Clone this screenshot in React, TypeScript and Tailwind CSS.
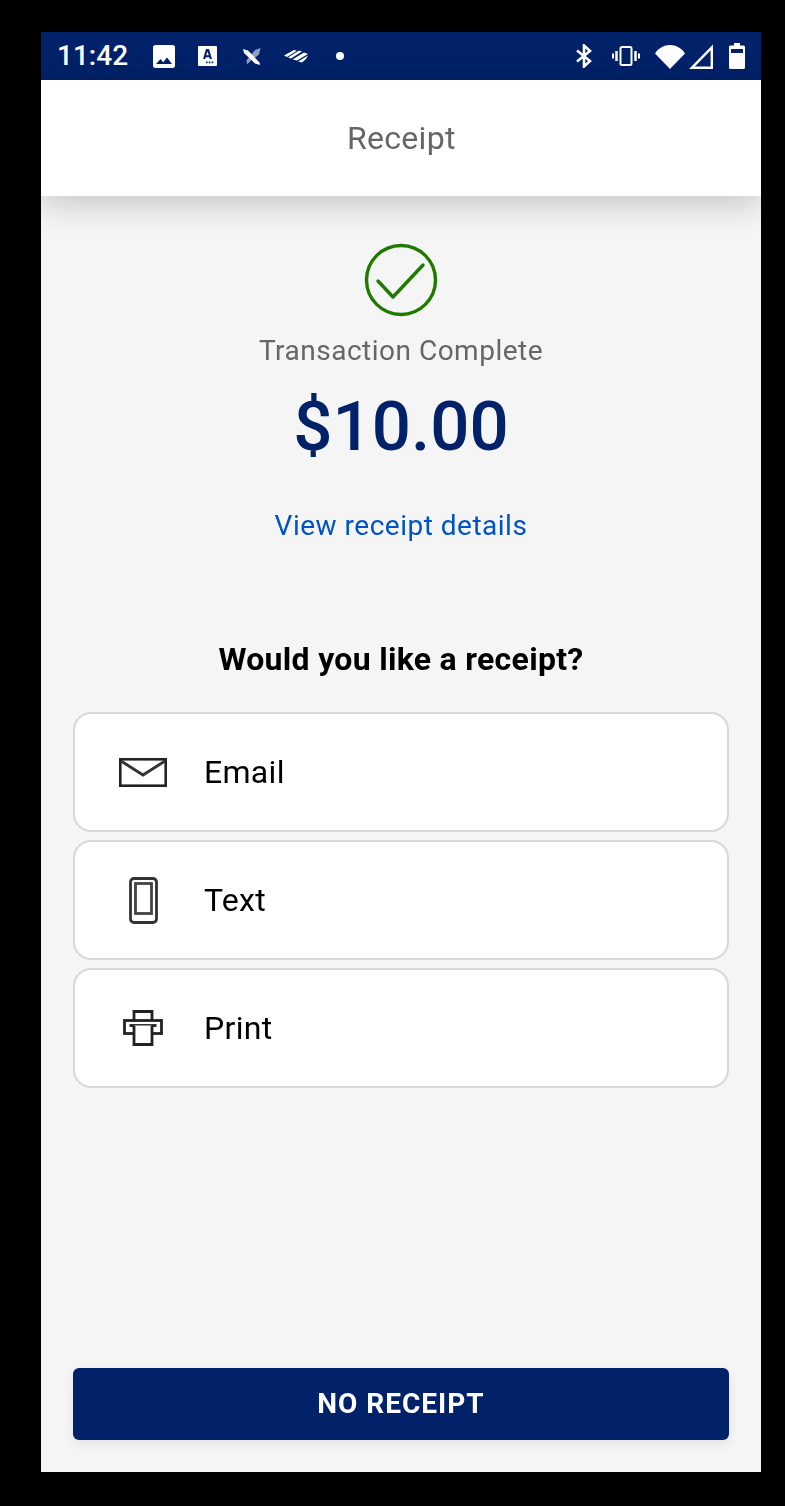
import { ReactNode } from "react";

function StatusBar() {
  return (
    <div className="h-12 bg-[#012169] flex items-center text-white shrink-0">
      <span className="ml-4 text-[28px] leading-none font-medium w-[96px] shrink-0">11:42</span>
      {/* notification icons */}
      <svg width="22" height="23" viewBox="0 0 22 23">
        <path fill="white" fillRule="evenodd" d="M2.500 0h17A2.500 2.500 0 0 1 22 2.500v18a2.500 2.500 0 0 1-2.500 2.500h-17A2.500 2.500 0 0 1 0 20.500v-18A2.500 2.500 0 0 1 2.500 0zM3 19h16l-5-6.500-3.800 4.700-2.700-3.200z" />
      </svg>
      <svg width="19" height="20" viewBox="0 0 19 20" className="ml-[23px]">
        <path fill="white" fillRule="evenodd" d="M1 0h17a1 1 0 0 1 1 1v18a1 1 0 0 1-1 1H1a1 1 0 0 1-1-1V1a1 1 0 0 1 1-1zM8 3 5 13h2.200l.5-1.800h3.600l.5 1.800H14L11 3zM9.500 5.500 10.800 9.300H8.200zM8 15.500h1.600v1.800H8zM10.800 15.500h1.600v1.800h-1.600zM13.600 15.500h1.600v1.800h-1.600z" />
      </svg>
      <svg width="18" height="17" viewBox="0 0 18 17" className="ml-[26px]">
        <path fill="#8f9dbf" d="M17.500 0 16 6.500 10.500 11 7.500 7.500 12 2zM6 9.500 8.500 12 4 16.500 3.500 12z" />
        <path fill="white" d="M0 1 5 2.500 16.500 14.500 17 17 12 15.500 1 5z" />
      </svg>
      <svg width="24" height="14" viewBox="0 0 24 14" className="ml-[23px]">
        <path fill="white" d="M0 6.500 10 1l2.800.8L3 8zM4 8.500 15 1.500l3 1L7 9.500zM8.500 10.500 20 3.500l4 1.500-11 6.500zM14 12.500 24 6.500l-2 3.500-4 3.500z" />
      </svg>
      <span className="ml-[28px] w-2 h-2 rounded-full bg-white shrink-0" />
      {/* system icons */}
      <div className="ml-auto flex items-center mr-4">
        <svg width="16" height="24" viewBox="0 0 16 24">
          <path fill="none" stroke="white" strokeWidth="2.600" d="M1 6.500 14 17l-6 5.500V1.500L14 7 1 17.500" />
        </svg>
        <svg width="28" height="20" viewBox="0 0 28 20" className="ml-5">
          <g fill="none" stroke="white">
            <rect x="8.500" y="1" width="11" height="18" rx="1.500" strokeWidth="2" />
            <path d="M4.500 5v10M23.500 5v10" strokeWidth="2.500" />
            <path d="M1 7.500v5M27 7.500v5" strokeWidth="2" />
          </g>
        </svg>
        <svg width="30" height="25" viewBox="0 0 30 25" className="ml-[15px]">
          <path fill="white" d="M15 25 0 9.500C3.500 4 9 1 15 1s11.500 3 15 8.500z" />
        </svg>
        <svg width="24" height="25" viewBox="0 0 24 25" className="ml-1">
          <path fill="none" stroke="white" strokeWidth="2.400" strokeLinejoin="miter" d="M22.800 3.500V23.800H2.800z" />
        </svg>
        <svg width="16" height="26" viewBox="0 0 16 26" className="ml-4">
          <path fill="white" fillRule="evenodd" d="M5 0h6v2.500h3.500A1.500 1.500 0 0 1 16 4v20.500a1.500 1.500 0 0 1-1.500 1.500h-13A1.500 1.500 0 0 1 0 24.500V4a1.500 1.500 0 0 1 1.500-1.500H5zM2 6v4h12V6z" />
        </svg>
      </div>
    </div>
  );
}

function EmailIcon() {
  return (
    <svg width="48" height="29" viewBox="0 0 48 29" fill="none">
      <rect x="1.300" y="1.300" width="45.400" height="26.400" fill="#fff" stroke="#222" strokeWidth="2.600" />
      <path d="M2 3 24 17 46 3" stroke="#333" strokeWidth="2.800" />
    </svg>
  );
}

function PhoneIcon() {
  return (
    <svg width="29" height="47" viewBox="0 0 29 47" fill="none">
      <rect x="1.500" y="1.500" width="26" height="44" rx="3.500" stroke="#333" strokeWidth="2.800" />
      <rect x="6.500" y="6.500" width="16" height="30" stroke="#444" strokeWidth="2.800" />
    </svg>
  );
}

function PrinterIcon() {
  return (
    <svg width="40" height="36" viewBox="0 0 40 36" fill="none" stroke="#222" strokeWidth="2.800">
      <path d="M11 11V1.500h18V11" />
      <rect x="1.500" y="10.500" width="37" height="13" />
      <path d="M6.500 15.500h27" />
      <path d="M11 15.500v19h18v-19" fill="#fff" />
    </svg>
  );
}

function OptionRow({ icon, label }: { icon: ReactNode; label: string }) {
  return (
    <div className="h-[120px] bg-white border-2 border-[#d8d8d8] rounded-[18px] flex items-center">
      <div className="w-[128px] flex justify-center shrink-0 pl-[16px] pr-[8px]">{icon}</div>
      <span className="pl-px text-[32px] leading-none text-black tracking-[0.3px]">{label}</span>
    </div>
  );
}

export default function App() {
  return (
    <div className="w-[785px] h-[1506px] bg-black pt-8 pl-[41px] font-['Roboto',sans-serif]">
      <div className="w-[720px] h-[1440px] bg-[#f5f5f5] flex flex-col">
        <StatusBar />
        <header className="h-[116px] bg-white shrink-0 flex items-center justify-center shadow-[0_8px_32px_rgba(0,0,0,0.2)] relative">
          <h1 className="text-[32px] leading-none text-[#666666] tracking-[0.3px] will-change-transform">Receipt</h1>
        </header>

        <main className="flex-1 flex flex-col items-center will-change-transform">
          <svg width="74" height="74" viewBox="0 0 74 74" fill="none" className="mt-[47px]">
            <circle cx="37" cy="37" r="34.500" stroke="#1f7a00" strokeWidth="3.400" />
            <path d="M14 38 29 54 59 22" stroke="#1f7a00" strokeWidth="3.400" strokeLinecap="round" strokeLinejoin="round" />
          </svg>
          <p className="mt-[14px] text-[28px] leading-[40px] text-[#666666] tracking-[0.5px]">Transaction Complete</p>
          <p className="mt-[14px] text-[69px] leading-[84px] font-medium text-[#012169]">$10.00</p>
          <a className="mt-[37px] text-[28px] leading-[40px] text-[#0053c2] tracking-[0.5px]">View receipt details</a>

          <h2 className="mt-[93px] text-[32px] leading-10 font-bold text-black tracking-[0.3px]">Would you like a receipt?</h2>

          <div className="mt-[33px] w-[656px] flex flex-col gap-2">
            <OptionRow icon={<EmailIcon />} label="Email" />
            <OptionRow icon={<PhoneIcon />} label="Text" />
            <OptionRow icon={<PrinterIcon />} label="Print" />
          </div>

          <button className="mt-auto mb-8 w-[656px] h-[72px] bg-[#012169] rounded-[6px] text-white text-[28px] font-bold tracking-[1px] shadow-[0_4px_12px_rgba(0,0,0,0.08)]">
            NO RECEIPT
          </button>
        </main>
      </div>
    </div>
  );
}
